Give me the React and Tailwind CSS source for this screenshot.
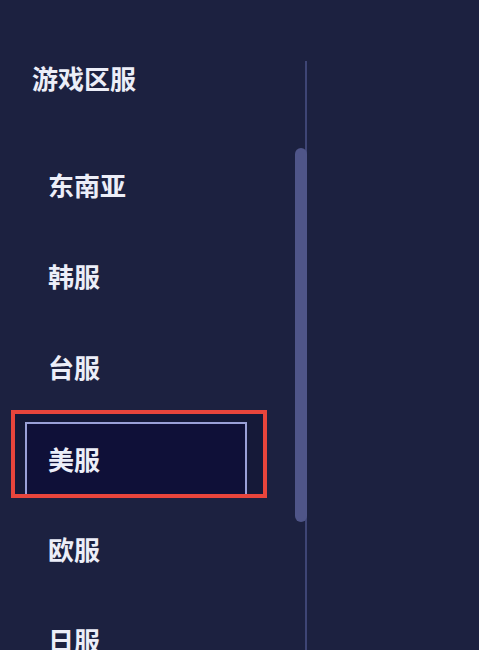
import React from "react";

const items = ["东南亚", "韩服", "台服", "美服", "欧服", "日服"];

export default function App() {
  return (
    <div
      className="w-[479px] h-[650px] bg-[#1c2140] flex overflow-hidden text-[#eceef8]"
      style={{ fontFamily: '"Noto Sans CJK SC", "Noto Sans", sans-serif' }}
    >
      <div className="w-[295px] flex flex-col shrink-0">
        <div className="h-[139px] pt-[65px] pl-[32px] text-[26px] leading-none font-bold shrink-0">
          游戏区服
        </div>
        <div className="flex flex-col pl-[25px]">
          {items.map((name) => {
            const selected = name === "美服";
            return (
              <div key={name} className="relative h-[91px] flex items-center shrink-0">
                {selected && (
                  <div className="absolute left-[-14px] top-[-2px] w-[256px] h-[88px] border-4 border-[#e8453c] bg-[#151938]" />
                )}
                <div
                  className={
                    selected
                      ? "relative h-[72px] w-[222px] pl-[21px] flex items-center border-t-2 border-x-2 border-[#9aa0d8] bg-[#0f1038]"
                      : "h-[72px] w-[222px] pl-[23px] flex items-center"
                  }
                >
                  <span className="text-[26px] leading-none font-bold">{name}</span>
                </div>
              </div>
            );
          })}
        </div>
      </div>
      <div className="relative w-[12px] shrink-0 h-full">
        <div className="absolute right-0 top-[61px] bottom-0 w-[2px] bg-[#3e4575]" />
        <div className="absolute left-0 top-[148px] h-[374px] w-[12px] rounded-full bg-[#4f5588]" />
      </div>
      <div className="flex-1 bg-[#1c2140]" />
    </div>
  );
}
